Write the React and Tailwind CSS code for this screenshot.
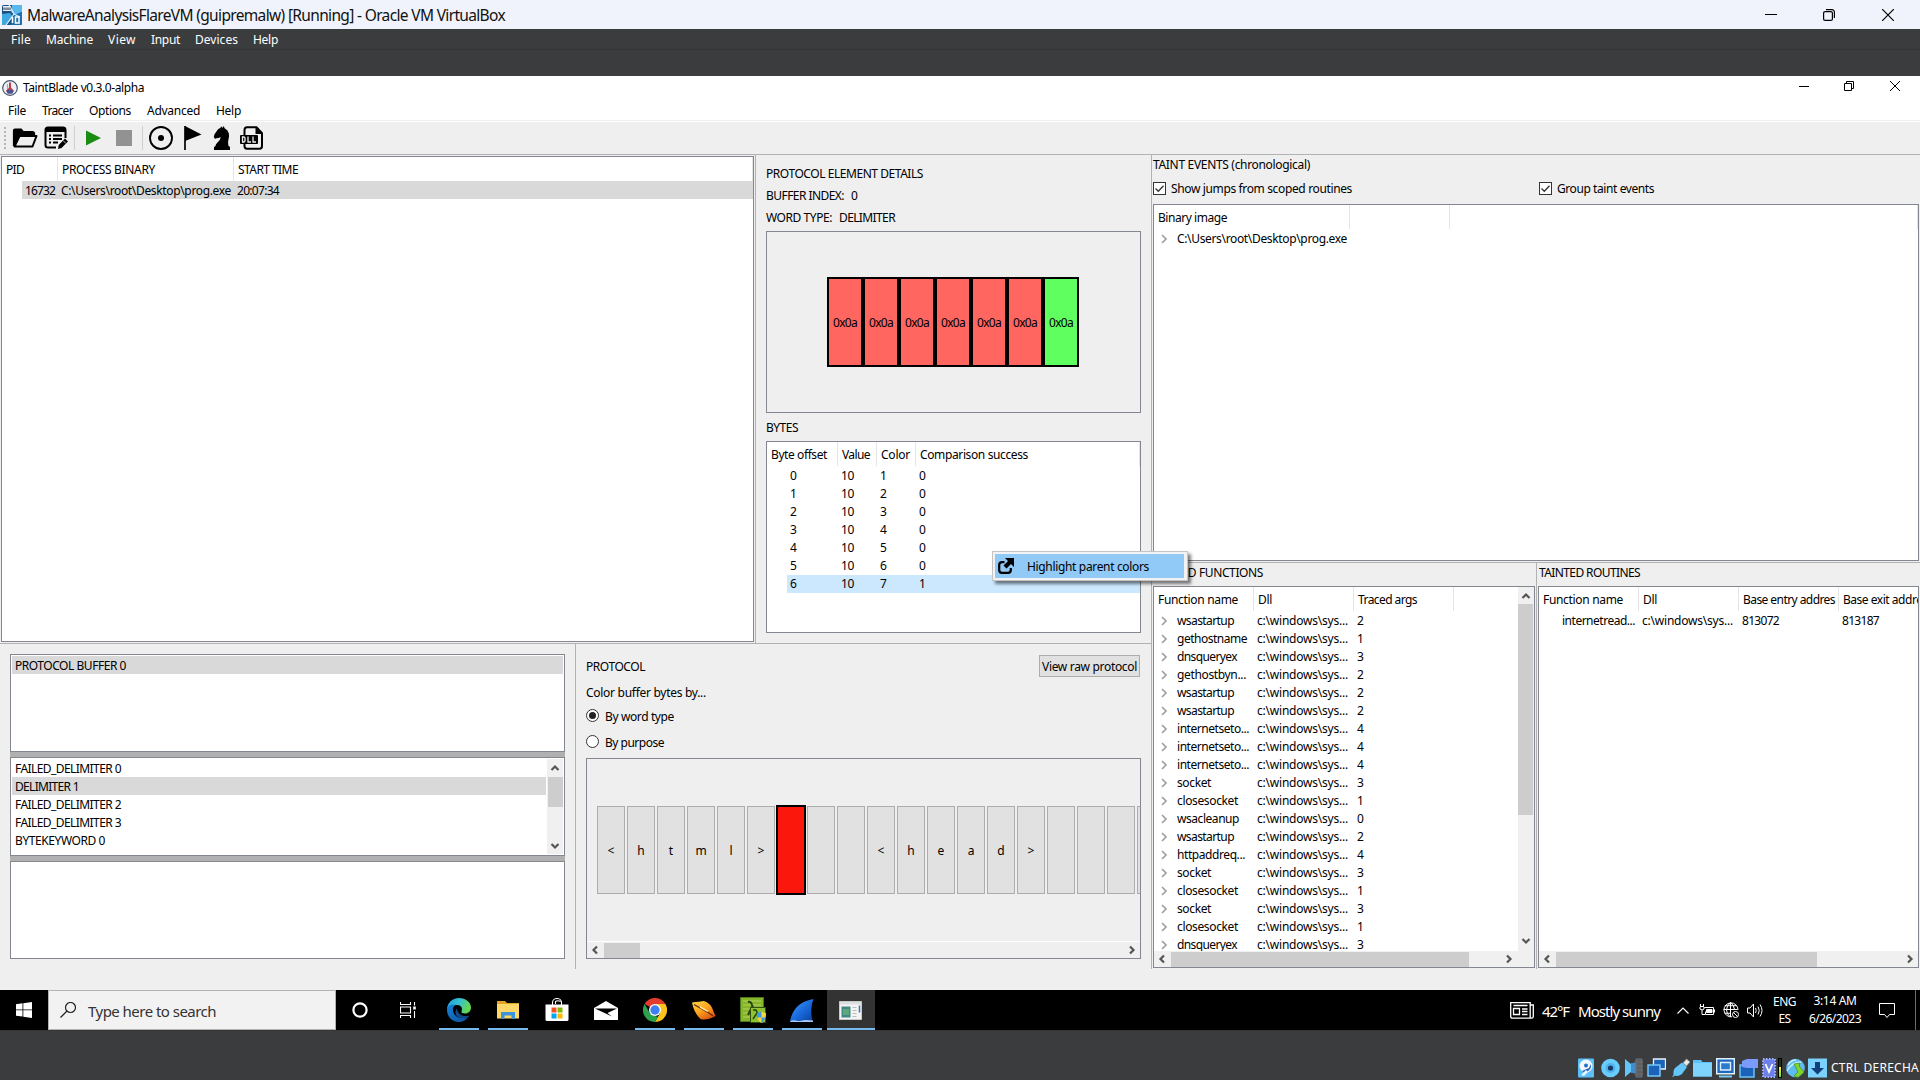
import React, { useLayoutEffect, useRef, useState } from "react";

/* A single-line label whose tracking is adjusted so that it spans w pixels. */
function T({ w, children, className = "" }) {
  const ref = useRef(null);
  const [spacing, setSpacing] = useState(0);
  useLayoutEffect(() => {
    const el = ref.current;
    el.style.letterSpacing = "0px";
    const natural = el.getBoundingClientRect().width;
    setSpacing((w - natural) / String(children).length);
  }, [w, children]);
  return (
    <span ref={ref} className={`inline-block shrink-0 whitespace-pre ${className}`} style={{ letterSpacing: `${spacing}px` }}>
      {children}
    </span>
  );
}

const Chevron = () => (
  <svg className="h-[10px] w-[7px] shrink-0" viewBox="0 0 7 10" fill="none" stroke="#9f9f9f" strokeWidth="1.7">
    <path d="M1 1l4 4-4 4" />
  </svg>
);

const arrowPaths = { up: "M1.5 7L5 3.5 8.5 7", down: "M1.5 3L5 6.5 8.5 3", left: "M7 1.5L3.5 5 7 8.5", right: "M3 1.5L6.5 5 3 8.5" };
const Arrow = ({ dir }) => (
  <svg className="h-[10px] w-[10px]" viewBox="0 0 10 10" fill="none" stroke="#555" strokeWidth="2.2">
    <path d={arrowPaths[dir]} />
  </svg>
);

/* ---------- host window ---------- */

const VBoxIcon = () => (
  <svg className="h-5 w-5" viewBox="0 0 20 20">
    <rect width="20" height="20" rx="1.5" fill="#1d4f82" />
    <path d="M0 9l8-1 3 4-7 8H1.500Q0 20 0 18z" fill="#3fa8e0" />
    <path d="M10 0h9l1 1v6l-7 3-4-3z" fill="#58b8ea" />
    <path d="M12 10l8-3v12l-1 1H8z" fill="#1c6fb0" />
    <path d="M7 0l5 9-8 11M12 9l6 3" stroke="#d9effb" strokeWidth="1.2" fill="none" />
    <rect x="1" y="1" width="8" height="5" fill="#e7eef5" />
    <path d="M2 5V2.500M4 5V2.500M6 5V2.500M8 5V2.500" stroke="#1a2d42" strokeWidth="1" />
    <path d="M10.500 12v6M13.500 12h3.500v6h-3.500z" stroke="#fff" strokeWidth="1.5" fill="none" />
  </svg>
);

function HostTitle() {
  return (
    <div className="flex h-[29px] items-center bg-[#f0f3fb] pl-[2px]">
      <VBoxIcon />
      <div className="ml-[5px] flex-1 pt-px text-[15.500px] text-[#111]">
        <T w={478}>MalwareAnalysisFlareVM (guipremalw) [Running] - Oracle VM VirtualBox</T>
      </div>
      <div className="flex items-center gap-[46px] pr-[26px] text-black">
        <svg className="h-[12px] w-[12px]" viewBox="0 0 12 12" stroke="currentColor"><path d="M0 5.500h12" /></svg>
        <svg className="h-[12px] w-[12px]" viewBox="0 0 12 12" fill="none" stroke="currentColor" strokeWidth="1.2">
          <rect x=".6" y="2.600" width="8.800" height="8.800" rx="1.500" />
          <path d="M3 .6h6a2.400 2.400 0 0 1 2.400 2.400v6" />
        </svg>
        <svg className="ml-px h-[12px] w-[12px]" viewBox="0 0 12 12" stroke="currentColor" strokeWidth="1.2"><path d="M0 0l12 12M12 0L0 12" /></svg>
      </div>
    </div>
  );
}

function HostMenu() {
  const items = [["File", 20], ["Machine", 47], ["View", 28], ["Input", 29], ["Devices", 43], ["Help", 25]];
  return (
    <div className="h-[47px] bg-[#3b3c3e] text-white">
      <div className="flex h-[21px] items-center gap-[15px] border-b border-[#333435] pl-[11px] pt-[2px]">
        {items.map(([t, w]) => <T key={t} w={w}>{t}</T>)}
      </div>
    </div>
  );
}

/* ---------- guest application chrome ---------- */

function AppTitle() {
  return (
    <div className="flex h-[23px] items-center bg-white pl-[2px]">
      <svg className="h-4 w-4" viewBox="0 0 16 16">
        <circle cx="8" cy="8" r="7.300" fill="#eef1f6" stroke="#44566e" strokeWidth="1.200" />
        <path d="M7 2.500h2v5l3 3.500-2 2.500H6L4 11l3-3.500z" fill="#c53b45" />
        <path d="M4.500 10c2-1 5 1 7 0l-1 3.500h-5z" fill="#41539a" />
        <path d="M5.500 4v5" stroke="#7ab4d8" strokeWidth="1.200" />
      </svg>
      <div className="ml-[5px] flex-1"><T w={121}>TaintBlade v0.3.0-alpha</T></div>
      <div className="flex items-center gap-[35px] pb-[3px] pr-[20px] text-black">
        <svg className="h-[10px] w-[10px]" viewBox="0 0 10 10" stroke="currentColor"><path d="M0 5.500h10" /></svg>
        <svg className="h-[10px] w-[10px]" viewBox="0 0 10 10" fill="none" stroke="currentColor"><path d="M.5 2.500h7v7h-7zM2.500 2.500v-2h7v7h-2" /></svg>
        <svg className="ml-px h-[10px] w-[10px]" viewBox="0 0 10 10" stroke="currentColor"><path d="M0 0l10 10M10 0L0 10" /></svg>
      </div>
    </div>
  );
}

function AppMenu() {
  const items = [["File", 18], ["Tracer", 31], ["Options", 42], ["Advanced", 53], ["Help", 25]];
  return (
    <div className="flex h-[22px] items-center gap-4 border-b border-[#efefef] bg-white pl-2 pt-[2px]">
      {items.map(([t, w]) => <T key={t} w={w}>{t}</T>)}
    </div>
  );
}

const ToolSep = () => <div className="h-6 w-px bg-[#cfcfcf]" />;

function Toolbar() {
  return (
    <div className="mt-px flex h-[33px] items-start border-b border-[#b2b2b2] bg-[#efefef] pt-1">
      <svg className="ml-1 mt-px h-6 w-[2px]" viewBox="0 0 2 24"><path d="M1 0v24" stroke="#b5b5b5" strokeWidth="2" strokeDasharray="2 2" /></svg>
      <svg className="ml-[6px] h-6 w-[26px]" viewBox="0 0 26 24">
        <path d="M2 20V4.500Q2 3.500 3 3.500h6l2 2.500h9.500Q22 6 22 7.500V9" fill="none" stroke="#000" strokeWidth="2.200" />
        <path d="M2 4h7l2 2.500h11V9H8L3 19z" fill="#000" />
        <path d="M7.500 10h17l-4 10.500H2.500z" fill="#efefef" stroke="#000" strokeWidth="2" strokeLinejoin="round" />
      </svg>
      <svg className="ml-[6px] h-6 w-6" viewBox="0 0 24 24">
        <path d="M12 21.500H4Q1.500 21.500 1.500 19V4Q1.500 1.500 4 1.500h15Q21.500 1.500 21.500 4v8" fill="none" stroke="#000" strokeWidth="2" />
        <path d="M2 1.500h19.500V6H2z" fill="#000" />
        <path d="M5 9.500h2M5 13h2M5 16.500h2M9 9.500h9M9 13h9M9 16.500h5" stroke="#000" strokeWidth="1.800" />
        <path d="M14 23l.7-4 6.300-6.500 3 3-6.500 6.500z" fill="#000" />
        <path d="M19 14.500l3 3" stroke="#efefef" strokeWidth=".8" />
      </svg>
      <div className="ml-[6px]"><ToolSep /></div>
      <svg className="ml-[11px] h-6 w-[15px]" viewBox="0 0 15 24"><path d="M0 4.500l15 7.500-15 7.500z" fill="#1a8c12" /></svg>
      <div className="ml-[15px] mt-1 h-[16px] w-[16px] bg-[#929292]" />
      <div className="ml-[10px]"><ToolSep /></div>
      <svg className="ml-[6px] h-6 w-6" viewBox="0 0 24 24"><circle cx="12" cy="12" r="11" fill="none" stroke="#000" strokeWidth="1.900" /><circle cx="12" cy="12" r="3" /></svg>
      <svg className="ml-[11px] h-6 w-[18px]" viewBox="0 0 18 24"><path d="M1 0v24" stroke="#000" strokeWidth="1.700" /><path d="M1 0l16.500 8.500L1 15z" /></svg>
      <svg className="ml-[11px] h-6 w-[18px]" viewBox="0 0 18 24">
        <path d="M1 24v-2.500q0-1 1.500-1.500 0-2 2-3.500 3-2.500 3.200-5.500Q5 12.500 3.200 12.200L2 13 .8 11l.7-2.800L4.500 4q.8-1.500 3-2L8 .3l1.500 1.500L10.800 0l.8 2.200q3.200 1.300 4.200 5 .8 3-.3 6.300-.8 2.500-.2 5l.2 1.500q1.500.3 1.500 1.500V24z" />
      </svg>
      <svg className="ml-[9px] h-6 w-[24px]" viewBox="0 0 24 24">
        <path d="M4.500 9V4Q4.500 1.200 7 1.200h9.500l5.500 6V20Q22 22.800 19.500 22.800H7Q4.500 22.800 4.500 20v-2" fill="none" stroke="#000" strokeWidth="2" />
        <path d="M15.500 1v7H22z" />
        <rect x="0" y="9" width="18" height="9" rx="1" />
        <path d="M2.500 11v5h1.500l1-1v-3l-1-1zM8 10.500V16h3M13 10.500V16h3" fill="none" stroke="#efefef" strokeWidth="1.300" />
      </svg>
    </div>
  );
}

/* ---------- tree/table building blocks ---------- */

const Head = ({ children }) => <div className="flex h-6 shrink-0 items-stretch">{children}</div>;
const HeadCell = ({ width, pad, children, line = true }) => (
  <div className={`flex shrink-0 items-center overflow-hidden whitespace-nowrap pt-[2px] ${line ? "border-r border-[#e5e5e5]" : ""}`} style={{ width, paddingLeft: pad }}>
    {children}
  </div>
);
const Cell = ({ width, pad = 0, children }) => (
  <div className="flex h-[18px] shrink-0 items-center whitespace-nowrap" style={{ width, paddingLeft: pad }}>{children}</div>
);

function ProcessTree() {
  return (
    <div className="ml-px mt-px h-[486px] w-[753px] border border-[#828790] bg-white">
      <Head>
        <HeadCell width={56} pad={4}><T w={18}>PID</T></HeadCell>
        <HeadCell width={176} pad={4}><T w={93}>PROCESS BINARY</T></HeadCell>
        <HeadCell width={519} pad={4}><T w={60}>START TIME</T></HeadCell>
      </Head>
      <div className="ml-5 flex h-[18px] items-center bg-[#d9d9d9] pt-[2px]">
        <Cell width={36} pad={3}><T w={30}>16732</T></Cell>
        <Cell width={176} pad={3}><T w={170}>C:\Users\root\Desktop\prog.exe</T></Cell>
        <Cell width={100} pad={3}><T w={42}>20:07:34</T></Cell>
      </div>
    </div>
  );
}

function ElementDetails() {
  return (
    <div className="w-[395px] pl-[10px] pt-2">
      <div className="flex h-[22px] items-center"><T w={157}>PROTOCOL ELEMENT DETAILS</T></div>
      <div className="flex h-[22px] items-center gap-[7px]"><T w={78}>BUFFER INDEX:</T><T w={6}>0</T></div>
      <div className="flex h-[22px] items-center gap-[7px]"><T w={66}>WORD TYPE:</T><T w={56}>DELIMITER</T></div>
      <div className="mt-[2px] flex h-[182px] w-[375px] items-center justify-center border border-[#828790] pr-px">
        {[0, 1, 2, 3, 4, 5, 6].map((i) => (
          <div key={i} className={`flex h-[90px] w-9 items-center justify-center border-2 border-black pt-[2px] ${i === 6 ? "bg-[#60ff60]" : "bg-[#ff6660]"}`}>
            <T w={24}>0x0a</T>
          </div>
        ))}
      </div>
      <div className="mt-1 flex h-[22px] items-center"><T w={32}>BYTES</T></div>
      <div className="mt-[2px] h-[192px] w-[375px] border border-[#828790] bg-white">
        <Head>
          <HeadCell width={71} pad={4}><T w={56}>Byte offset</T></HeadCell>
          <HeadCell width={39} pad={4}><T w={28}>Value</T></HeadCell>
          <HeadCell width={39} pad={4}><T w={29}>Color</T></HeadCell>
          <HeadCell width={224} pad={4}><T w={108}>Comparison success</T></HeadCell>
        </Head>
        <div className="pt-px">
          {[0, 1, 2, 3, 4, 5, 6].map((n) => (
            <div key={n} className={`ml-5 flex h-[18px] items-center ${n === 6 ? "bg-[#cce8ff]" : ""}`}>
              <Cell width={51} pad={3}>{n}</Cell>
              <Cell width={39} pad={3}><T w={13}>10</T></Cell>
              <Cell width={39} pad={3}>{n + 1}</Cell>
              <Cell width={40} pad={3}>{n === 6 ? 1 : 0}</Cell>
            </div>
          ))}
        </div>
      </div>
    </div>
  );
}

function BufferLists() {
  const words = [["FAILED_DELIMITER 0", 106], ["DELIMITER 1", 64], ["FAILED_DELIMITER 2", 106], ["FAILED_DELIMITER 3", 106], ["BYTEKEYWORD 0", 90]];
  return (
    <div className="w-[575px] pl-[10px] pt-[10px]">
      <div className="flex h-[305px] w-[555px] flex-col gap-[5px] bg-[#b0b0b0]">
        <div className="h-[98px] border border-[#828790] bg-white p-px">
          <div className="flex h-[18px] items-center bg-[#d9d9d9] pl-[3px] pt-[2px]"><T w={111}>PROTOCOL BUFFER 0</T></div>
        </div>
        <div className="flex h-[99px] border border-[#828790] bg-white p-px">
          <div className="mr-px flex-1">
            {words.map(([t, w], i) => (
              <div key={t} className={`flex h-[18px] items-center pl-[3px] pt-[2px] ${i === 1 ? "bg-[#d9d9d9]" : ""}`}><T w={w}>{t}</T></div>
            ))}
          </div>
          <div className="flex w-4 flex-col items-center bg-[#f0f0f0]">
            <div className="flex h-[18px] items-center"><Arrow dir="up" /></div>
            <div className="h-[30px] w-[15px] bg-[#cdcdcd]" />
            <div className="mt-auto flex h-[17px] items-center"><Arrow dir="down" /></div>
          </div>
        </div>
        <div className="h-[98px] border border-[#828790] bg-white" />
      </div>
    </div>
  );
}

const Radio = ({ on }) => (
  <div className="mb-[3px] flex h-[13px] w-[13px] items-center justify-center rounded-full border border-[#333] bg-white">
    {on && <div className="h-[7px] w-[7px] rounded-full bg-[#222]" />}
  </div>
);

function ProtocolPanel() {
  const bytes = ["<", "h", "t", "m", "l", ">", null, "", "", "<", "h", "e", "a", "d", ">", "", "", "", ""];
  return (
    <div className="w-[575px] pl-[10px] pt-[11px]">
      <div className="flex h-[22px] w-[554px] items-center justify-between">
        <div className="pt-[2px]"><T w={59}>PROTOCOL</T></div>
        <div className="flex h-[22px] w-[101px] items-center justify-center border border-[#adadad] bg-[#e1e1e1] pt-[2px]"><T w={95}>View raw protocol</T></div>
      </div>
      <div className="mt-[5px] flex h-[22px] items-center"><T w={120}>Color buffer bytes by...</T></div>
      <div className="mt-[2px] flex h-[22px] items-center gap-[6px]"><Radio on /><T w={69}>By word type</T></div>
      <div className="mt-1 flex h-[22px] items-center gap-[6px]"><Radio /><T w={59}>By purpose</T></div>
      <div className="mt-[4px] flex h-[201px] w-[555px] flex-col border border-[#828790]">
        <div className="flex h-[183px] items-center overflow-hidden border-b border-white pl-[9px]">
          {bytes.map((b, i) =>
            b === null ? (
              <div key={i} className="h-[90px] w-[30px] shrink-0 border-2 border-black bg-[#fc170d]" />
            ) : (
              <div key={i} className="mx-px flex h-[88px] w-7 shrink-0 items-center justify-center border border-[#adadad] bg-[#e1e1e1] pt-[2px]">{b}</div>
            )
          )}
        </div>
        <div className="flex h-[16px] items-center">
          <div className="flex w-[17px] justify-center pr-px"><Arrow dir="left" /></div>
          <div className="h-[15px] w-9 bg-[#cdcdcd]" />
          <div className="ml-auto flex w-[17px] justify-center"><Arrow dir="right" /></div>
        </div>
      </div>
    </div>
  );
}

/* ---------- taint events and function tables ---------- */

const Check = ({ label, w, className = "" }) => (
  <div className={`flex items-center gap-[5px] ${className}`}>
    <svg className="h-[13px] w-[13px]" viewBox="0 0 13 13"><rect x=".5" y=".5" width="12" height="12" fill="#fff" stroke="#333" /><path d="M2.500 6.500l2.800 2.800 5.200-5.500" fill="none" stroke="#333" strokeWidth="1.300" /></svg>
    <div className="pt-[2px]"><T w={w}>{label}</T></div>
  </div>
);

function TaintEvents() {
  return (
    <div className="pl-px">
      <div className="flex h-[20px] items-center"><T w={157}>TAINT EVENTS (chronological)</T></div>
      <div className="mt-[3px] flex h-5 items-center">
        <Check label="Show jumps from scoped routines" w={181} className="w-[386px]" />
        <Check label="Group taint events" w={97} />
      </div>
      <div className="mt-[6px] h-[357px] w-[766px] border border-[#828790] bg-white">
        <Head>
          <HeadCell width={196} pad={4}><T w={69}>Binary image</T></HeadCell>
          <HeadCell width={100} />
          <HeadCell width={468} />
        </Head>
        <div className="mt-px flex h-[18px] items-center pl-[7px]"><Chevron /><div className="ml-[9px]"><T w={170}>C:\Users\root\Desktop\prog.exe</T></div></div>
      </div>
    </div>
  );
}

const nameWidths = { wsastartup: 57, gethostname: 70, dnsqueryex: 60, "gethostbyn...": 69, "internetseto...": 72, socket: 34, closesocket: 61, wsacleanup: 62, "httpaddreq...": 68 };
const functions = [
  ["wsastartup", 2], ["gethostname", 1], ["dnsqueryex", 3], ["gethostbyn...", 2], ["wsastartup", 2], ["wsastartup", 2],
  ["internetseto...", 4], ["internetseto...", 4], ["internetseto...", 4], ["socket", 3], ["closesocket", 1], ["wsacleanup", 0],
  ["wsastartup", 2], ["httpaddreq...", 4], ["socket", 3], ["closesocket", 1], ["socket", 3], ["closesocket", 1], ["dnsqueryex", 3],
];

function TracedFunctions() {
  return (
    <div className="w-[384px] pl-px">
      <div className="flex h-[20px] items-center pl-px"><T w={109}>TRACED FUNCTIONS</T></div>
      <div className="mt-[3px] flex h-[382px] w-[382px] flex-col border border-[#828790] bg-[#f0f0f0]">
        <div className="flex h-[364px]">
          <div className="w-[364px] overflow-hidden bg-white">
            <Head>
              <HeadCell width={100} pad={4}><T w={80}>Function name</T></HeadCell>
              <HeadCell width={100} pad={4}><T w={14}>Dll</T></HeadCell>
              <HeadCell width={100} pad={4}><T w={59}>Traced args</T></HeadCell>
            </Head>
            <div className="pt-px">
              {functions.map(([n, a], i) => (
                <div key={i} className="flex h-[18px] items-center">
                  <Cell width={100} pad={7}><Chevron /><div className="ml-[9px]"><T w={nameWidths[n]}>{n}</T></div></Cell>
                  <Cell width={100} pad={3}><T w={91}>c:\windows\sys...</T></Cell>
                  <Cell width={60} pad={3}>{a}</Cell>
                </div>
              ))}
            </div>
          </div>
          <div className="flex w-[15px] flex-col items-center">
            <div className="flex h-[17px] items-center"><Arrow dir="up" /></div>
            <div className="h-[211px] w-[15px] bg-[#cdcdcd]" />
            <div className="mt-auto flex h-[19px] items-center pb-px"><Arrow dir="down" /></div>
          </div>
        </div>
        <div className="flex h-[16px] w-[363px] items-center">
          <div className="flex w-[17px] justify-center pr-[2px]"><Arrow dir="left" /></div>
          <div className="h-[15px] w-[298px] bg-[#cdcdcd]" />
          <div className="ml-auto flex w-[17px] justify-center"><Arrow dir="right" /></div>
        </div>
      </div>
    </div>
  );
}

function TaintedRoutines() {
  return (
    <div className="w-[383px] overflow-hidden pl-px">
      <div className="flex h-[20px] items-center pl-px"><T w={101}>TAINTED ROUTINES</T></div>
      <div className="mt-[3px] flex h-[382px] w-[381px] flex-col border border-[#828790] bg-[#f0f0f0]">
        <div className="h-[364px] overflow-hidden bg-white">
          <Head>
            <HeadCell width={100} pad={4}><T w={80}>Function name</T></HeadCell>
            <HeadCell width={100} pad={4}><T w={14}>Dll</T></HeadCell>
            <HeadCell width={100} pad={4}><T w={92}>Base entry addres</T></HeadCell>
            <HeadCell width={79} pad={4} line={false}><T w={90}>Base exit address</T></HeadCell>
          </Head>
          <div className="mt-px flex h-[18px] items-center">
            <Cell width={100} pad={23}><T w={73}>internetread...</T></Cell>
            <Cell width={100} pad={3}><T w={91}>c:\windows\sys...</T></Cell>
            <Cell width={100} pad={3}><T w={37}>813072</T></Cell>
            <Cell width={79} pad={3}><T w={37}>813187</T></Cell>
          </div>
        </div>
        <div className="flex h-[16px] items-center">
          <div className="flex w-[17px] justify-center pr-[2px]"><Arrow dir="left" /></div>
          <div className="h-[15px] w-[261px] bg-[#cdcdcd]" />
          <div className="ml-auto flex w-[17px] justify-center"><Arrow dir="right" /></div>
        </div>
      </div>
    </div>
  );
}

function ContextMenu() {
  return (
    <div className="absolute left-[992px] top-[551px] h-[30px] w-[196px] border border-[#c4c4c4] bg-[#f2f2f2] p-[2px] shadow-[3px_3px_3px_rgba(0,0,0,0.5)]">
      <div className="flex h-6 w-[189px] items-center bg-[#91c9f7] pl-[3px]">
        <svg className="h-4 w-4" viewBox="0 0 16 16">
          <path d="M6.500 4.200H4Q1.200 4.200 1.200 7v5Q1.200 14.800 4 14.800h6Q12.800 14.800 12.800 12v-2" fill="none" stroke="#000" strokeWidth="2.200" />
          <path d="M7 0h9v9l-3-3-4.500 4.500L5.500 7.500 10 3z" />
        </svg>
        <div className="ml-[13px] pt-[2px]"><T w={122}>Highlight parent colors</T></div>
      </div>
    </div>
  );
}

/* ---------- taskbar ---------- */

const icons = {
  edge: (
    <svg className="h-6 w-6" viewBox="0 0 24 24">
      <defs>
        <linearGradient id="e1" x1="0" y1="0" x2="1" y2=".3"><stop offset="0" stopColor="#1b9de2" /><stop offset=".55" stopColor="#35c1d0" /><stop offset="1" stopColor="#66d84f" /></linearGradient>
        <linearGradient id="e2" x1="0" y1="0" x2="1" y2="1"><stop offset="0" stopColor="#1683d8" /><stop offset="1" stopColor="#0c4f9c" /></linearGradient>
      </defs>
      <path d="M0 12C0 5 5 0 12 0c7 0 12 4.500 12 9.500 0 3.500-2.500 6-6 6-2.500 0-4-1-3.500-2C16 10 14 7 10.500 7 5 7 0 9.500 0 12z" fill="url(#e1)" />
      <path d="M0 12c.5-4 4-6.500 8.500-5C5 9 5.500 14 8 17c3 3.500 9 4 13.500 1.500C19.500 22 16 24 12 24 5 24 0 18.500 0 12z" fill="url(#e2)" />
      <path d="M10 10.500c-3 3-1.500 9 4 9.500 3.500.3 6-.5 7.800-1.500.5-.3 0-1-.6-.8C16 19 10.500 16.500 10 10.500z" fill="#114a8b" />
    </svg>
  ),
  folder: (
    <svg className="h-[18px] w-[22px]" viewBox="0 0 22 18">
      <path d="M0 0h8l2 2h12v15H0z" fill="#e0a526" /><path d="M0 3h22v14.500H0z" fill="#ffd768" />
      <path d="M4 18v-7h14v7h-3.500v-3.500h-7V18z" fill="#3b94d9" />
    </svg>
  ),
  store: (
    <svg className="h-[24px] w-[24px]" viewBox="0 0 24 24">
      <path d="M7.500 7V4.500a4.500 4 0 0 1 9 0V7M10.500 6V3.500a4 3 0 0 1 5 0" fill="none" stroke="#fff" strokeWidth="1.100" />
      <path d="M.5 6.500h23v15q0 1.500-1.500 1.500H2Q.5 23 .5 21.500z" fill="#fff" />
      <path d="M6.500 9.500h5v5h-5z" fill="#f25022" /><path d="M12.500 9.500h5v5h-5z" fill="#7fba00" />
      <path d="M6.500 15.500h5v5h-5z" fill="#00a4ef" /><path d="M12.500 15.500h5v5h-5z" fill="#ffb900" />
    </svg>
  ),
  mail: (
    <svg className="h-[19px] w-6" viewBox="0 0 24 19"><path d="M0 7l12-7 12 7v12H0z" fill="#fff" /><path d="M1 7.500h22L13.500 12l4.500 3.500L9.500 11.500z" fill="#000" /></svg>
  ),
  chrome: (
    <svg className="h-6 w-6" viewBox="0 0 24 24">
      <path d="M12 12L1.600 6A12 12 0 0 1 22.400 6z" fill="#e33b2e" />
      <path d="M12 6h10.400A12 12 0 0 1 12 24l5.200-9z" fill="#fcc31e" />
      <path d="M12 24A12 12 0 0 1 1.600 6l5.200 9 5.200 3 3 .8z" fill="#2ba24c" />
      <circle cx="12" cy="12" r="6" fill="#fff" /><circle cx="12" cy="12" r="4.700" fill="#3f80ee" />
    </svg>
  ),
  leaf: (
    <svg className="h-[19px] w-6" viewBox="0 0 24 19">
      <defs><linearGradient id="lf" x1="0" y1="0" x2=".7" y2="1"><stop offset="0" stopColor="#ffd84b" /><stop offset=".55" stopColor="#fba21d" /><stop offset="1" stopColor="#dd5312" /></linearGradient></defs>
      <path d="M0 1.500Q8 .5 12 0q7 2 9.500 10.500l2 4.500-3 1.500Q14 19.500 8.500 18 2 12 0 1.500z" fill="url(#lf)" />
      <path d="M2 3.500l15 8.500 4 3" stroke="#5a2408" strokeWidth="1.100" fill="none" /><path d="M8 6l8 4.300" stroke="#ffe9a0" strokeWidth="1.500" />
    </svg>
  ),
  lambda: (
    <svg className="h-[26px] w-[26px]" viewBox="0 0 26 26">
      <path d="M.5.5h23v24H.5z" fill="#86b52a" stroke="#4d7a1c" /><path d="M3 4h18M3 8h18M3 12h18M3 16h18M3 20h18" stroke="#b0d45d" />
      <path d="M8 5q3-1 4 3l3 8M12 10l-4 8" fill="none" stroke="#24410e" strokeWidth="2" />
      <path d="M10.500 10.500h15v15h-15z" fill="#8fc230" stroke="#31520f" /><path d="M13 13h3l4 9M17 16l-4 6" fill="none" stroke="#24410e" strokeWidth="1.500" />
      <path d="M17 16q4-.5 4.500-1.500Q23 15.500 26 16q0 8-4.500 10Q17 24 17 16z" fill="#f7d33c" /><path d="M21.500 14.500v6H17q-.3-3 0-4.500zM21.500 20.500h4q-1 4-4 5.500z" fill="#3c9be0" />
    </svg>
  ),
  shark: (
    <svg className="h-[23px] w-[24px]" viewBox="0 0 24 23">
      <defs><linearGradient id="sh" x1="0" y1="0" x2="1" y2="1"><stop offset="0" stopColor="#4c9bf2" /><stop offset=".5" stopColor="#1b6ee0" /><stop offset="1" stopColor="#0b3f9e" /></linearGradient></defs>
      <path d="M0 22Q4 3 23.500 0q-4 9-1 22z" fill="url(#sh)" /><path d="M0 22.500q3-2 6-1t6 0 11 0v1.500H0z" fill="#a9c9f0" />
    </svg>
  ),
  app: (
    <svg className="h-[19px] w-[23px]" viewBox="0 0 23 19">
      <path d="M.5.500h22v18H.5z" fill="#f3f3f3" stroke="#c9c9c9" /><path d="M1 1h21v2.500H1z" fill="#dcdfe2" />
      <path d="M2.500 5.500h9v11h-9z" fill="#3f8a86" /><path d="M4 8h6v6H4z" fill="#5fa77a" />
      <path d="M13.500 6.500h4M13.500 9.500h4M13.500 12.500h4M13.500 15.500h4" stroke="#bdbdbd" strokeWidth="1.200" /><path d="M20.500 4.500v7" stroke="#3b6fc4" strokeWidth="1.500" />
    </svg>
  ),
};

const tasks = [["edge", true], ["folder", true], ["store", false], ["mail", false], ["chrome", true], ["leaf", true], ["lambda", true], ["shark", true]];

function Taskbar() {
  return (
    <div className="flex h-10 items-stretch bg-black text-white">
      <div className="flex w-12 items-center justify-center">
        <svg className="h-4 w-4" viewBox="0 0 16 16" fill="#fff"><path d="M0 2.200l6.500-.9v6.200H0zM7.300 1.200L16 0v7.500H7.300zM0 8.300h6.500v6.300L0 13.700zM7.300 8.300H16V16l-8.700-1.200z" /></svg>
      </div>
      <div className="flex w-[288px] items-center border border-[#b3b3b3] bg-[#f2f2f2] pl-[11px] text-[#333]">
        <svg className="h-4 w-4" viewBox="0 0 16 16" fill="none" stroke="#222" strokeWidth="1.200"><circle cx="10.500" cy="5.500" r="5" /><path d="M7 9L.5 15.500" /></svg>
        <div className="ml-3 pt-px text-[15px]"><T w={128}>Type here to search</T></div>
      </div>
      <div className="flex w-12 items-center justify-center">
        <svg className="h-4 w-4" viewBox="0 0 16 16"><circle cx="8" cy="8" r="6.600" fill="none" stroke="#fff" strokeWidth="2.200" /></svg>
      </div>
      <div className="flex w-12 items-center justify-center">
        <svg className="h-4 w-4" viewBox="0 0 16 16" fill="none" stroke="#fff" strokeWidth="1.100"><path d="M.5 0v2.500h10V0M.5 5h10v6H.5zM.5 16v-2.500h10V16M14.500 0v3.500M14.500 9v7" /><path d="M13.200 4.500h2.600v3h-2.600z" fill="#fff" stroke="none" /></svg>
      </div>
      <div className="ml-[2px] mr-px flex">
        {tasks.map(([name, running]) => (
          <div key={name} className="flex w-[49px] flex-col items-center">
            <div className="flex h-[38px] items-center pt-[2px]">{icons[name]}</div>
            {running && <div className="h-[2px] w-10 bg-[#76b9ed]" />}
          </div>
        ))}
      </div>
      <div className="flex w-12 flex-col items-center bg-[#333]">
        <div className="flex h-[38px] items-center pr-[2px] pt-[2px]">{icons.app}</div>
        <div className="h-[2px] w-full bg-[#76b9ed]" />
      </div>
      <div className="ml-auto flex items-center">
        <svg className="h-[17px] w-6" viewBox="0 0 24 17" fill="none" stroke="#fff" strokeWidth="1.300"><path d="M.7.7h19.500v15.500H2.500Q.7 16.200.7 14.500zM20.500 3h2.800v11.500q0 1.700-1.800 1.700H19" /><path d="M3.500 6.500h6v6h-6zM3.500 3.500h14M12 7h5.500M12 9.500h5.500M12 12.500h5.500" /></svg>
        <div className="ml-2 flex gap-[9px] pt-[2px] text-[15px]"><T w={27}>42°F</T><T w={82}>Mostly sunny</T></div>
        <svg className="ml-[17px] h-[7px] w-3" viewBox="0 0 12 7" fill="none" stroke="#fff" strokeWidth="1.200"><path d="M.5 6.500L6 1l5.500 5.500" /></svg>
        <svg className="ml-[10px] h-3 w-4" viewBox="0 0 16 12" fill="none" stroke="#fff"><path d="M5.500 3.500h9v7h-8V7.500M15.500 5.500v3M1 2.500h4M1.500 0v2.500M4.500 0v2.500M1 3v2q2 2 4 0V3M3 6v4.500h3" /><path d="M7.500 5.500h5.500v3H7.500z" fill="#fff" /></svg>
        <svg className="ml-2 h-4 w-4" viewBox="0 0 16 16" fill="none" stroke="#fff"><path d="M9 14.800A7 7 0 1 1 15 8M7.500.500v14.500M.5 7.500h14M1.800 3.700h11.500M1.800 11.300H8M7.500.5Q3.500 4 3.500 8t4 7M7.500.5Q11 3 11.500 7.500" /><circle cx="12.500" cy="12.500" r="3" /><path d="M10.500 10.500l4 4" /></svg>
        <svg className="ml-2 h-[15px] w-4" viewBox="0 0 16 15" fill="none" stroke="#fff"><path d="M.5 5h2.500l3.500-4v13L3 10H.5zM8.500 5q1.500 2.500 0 5M11 3.500q2.500 4 0 8M13 1.500q4 6 0 12" /></svg>
        <div className="ml-[10px] flex w-[23px] flex-col items-center leading-[17px]"><T w={23}>ENG</T><T w={12}>ES</T></div>
        <div className="ml-[13px] flex w-[52px] flex-col items-center leading-[18px]"><T w={43}>3:14 AM</T><T w={52}>6/26/2023</T></div>
        <svg className="ml-[18px] h-[17px] w-4" viewBox="0 0 16 17" fill="none" stroke="#fff"><path d="M.5 1.500h15v11h-5L8 15.500l-2.500-3h-5z" /></svg>
        <div className="ml-[20px] h-10 w-px bg-[#6b6b6b]" />
        <div className="w-1" />
      </div>
    </div>
  );
}

/* ---------- VirtualBox status bar ---------- */

const S = ({ w, children }) => <svg className="h-5 shrink-0" style={{ width: w }} viewBox={`0 0 ${w} 20`}>{children}</svg>;

function StatusBar() {
  return (
    <div className="flex h-[50px] items-end justify-end border-t border-[#333435] bg-[#3b3c3e] pb-[2px] text-white">
      <div className="flex items-center">
        <S w={16}><rect width="16" height="19" y=".5" rx="1" fill="#5cc0f8" /><circle cx="8" cy="8" r="6.500" fill="#f2f8fd" /><circle cx="8" cy="7.500" r="2" fill="#2273c4" /><path d="M13 6q1 6-6 9l-3-2 7-3z" fill="#2a66b8" /><path d="M3 17l5-5 2 2-4 4z" fill="#e9f5fd" /></S>
        <div className="w-[7px]" />
        <S w={19}><circle cx="9.500" cy="10" r="9.300" fill="#68cdfb" /><circle cx="9.500" cy="10" r="5" fill="#4fb2ee" /><circle cx="9.500" cy="10" r="2.600" fill="#173a63" /></S>
        <div className="w-1" />
        <S w={20}><path d="M1 1l7 6v6l-7 6z" fill="#62c6f9" /><path d="M7 5h5v10H7z" fill="#3a8fd6" /><path d="M12 1h6v18h-6zM10 4h9M10 8h9M10 12h9M10 16h9" fill="#5a5e63" stroke="#6c7075" /></S>
        <div className="w-[3px]" />
        <S w={19}><path d="M6.500 1h12v10h-12z" fill="#1b62b8" stroke="#eaf3fb" strokeWidth="1.300" /><path d="M1 7h12v11H1z" fill="#1b62b8" stroke="#74c8f8" strokeWidth="1.500" /></S>
        <div className="w-[5px]" />
        <S w={19}><path d="M12 5l3.500-4L19 4l-3.500 4z" fill="#e6e9ec" stroke="#8d9297" strokeWidth=".8" /><path d="M4 10l7-5.500 5 4.500-5 7q-4 3-7 1.500l-3 2 1.500-3Q2 12 4 10z" fill="#62c6f9" /></S>
        <div className="w-[3px]" />
        <S w={19}><path d="M0 2h8l1.500 2H19v14.500H0z" fill="#5bc1f8" /><path d="M0 5h19v13.500H0z" fill="#7fd4fd" /></S>
        <div className="w-1" />
        <S w={19}><path d="M.7.7h17.600v15H.7z" fill="#1f66bd" stroke="#dff1fd" strokeWidth="1.400" /><path d="M4.500 4.500h10v7.500h-10z" fill="#2a7ad0" stroke="#dff1fd" strokeWidth="1.400" /><path d="M3 18.500h13" stroke="#79cbf8" strokeWidth="2" /></S>
        <div className="w-1" />
        <S w={19}><path d="M1 7h14v12H1z" fill="#1c62b8" stroke="#67c4f7" strokeWidth="1.500" /><path d="M8 1h11v9H8l-5-1V3z" fill="#7b9bfa" /></S>
        <div className="w-1" />
        <S w={14}><path d="M1 1h12v18H1z" fill="#6d7fe8" stroke="#a3b0ff" strokeWidth="2" strokeDasharray="1.500 1.500" /><path d="M3.500 6l3.500 8 3.500-8" fill="none" stroke="#fff" strokeWidth="1.800" /></S>
        <div className="ml-[2px] flex h-5 w-1 items-end border border-black bg-[#26301c]"><div className="h-[10px] w-full bg-gradient-to-b from-[#f4f43a] to-[#47e52c]" /></div>
        <div className="w-1" />
        <S w={19}><circle cx="9.500" cy="10" r="9.300" fill="#5ebcf3" /><path d="M2 7q3-5 8-5M1 13q5-9 14-9" stroke="#c7ebff" strokeWidth="1.500" fill="none" /><path d="M8 6l6-1-1 3 5 6-6 5.500-4-1.500 4-4z" fill="#80d62c" stroke="#3e8b17" strokeWidth=".7" /></S>
        <div className="w-[3px]" />
        <S w={19}><rect y=".5" width="19" height="19" fill="#7ad1fc" /><path d="M7 4h5v6h4l-6.500 6.500L3 10h4z" fill="#123f7c" /></S>
        <div className="ml-1"><T w={88}>CTRL DERECHA</T></div>
        <div className="w-px" />
      </div>
    </div>
  );
}

export default function App() {
  return (
    <div className="relative h-[1080px] w-[1920px] overflow-hidden bg-[#efefef] font-['Noto_Sans','Open_Sans',sans-serif] text-[12px] leading-[18px] text-black">
      <HostTitle />
      <HostMenu />
      <div className="h-[914px]">
        <div className="bg-white">
          <AppTitle />
          <AppMenu />
          <Toolbar />
        </div>
        <div className="flex h-[835px]">
          <div className="w-[1151px]">
            <div className="flex h-[489px] border-b border-[#b2b2b2]">
              <ProcessTree />
              <div className="ml-px w-px bg-[#b2b2b2]" />
              <ElementDetails />
            </div>
            <div className="flex h-[325px]">
              <BufferLists />
              <div className="w-px bg-[#b2b2b2]" />
              <ProtocolPanel />
            </div>
          </div>
          <div className="h-[814px] w-px bg-[#b2b2b2]" />
          <div className="w-[768px]">
            <div className="h-[408px] border-b border-[#b2b2b2]"><TaintEvents /></div>
            <div className="flex h-[406px]">
              <TracedFunctions />
              <div className="w-px bg-[#b2b2b2]" />
              <TaintedRoutines />
            </div>
          </div>
        </div>
      </div>
      <Taskbar />
      <StatusBar />
      <ContextMenu />
    </div>
  );
}
